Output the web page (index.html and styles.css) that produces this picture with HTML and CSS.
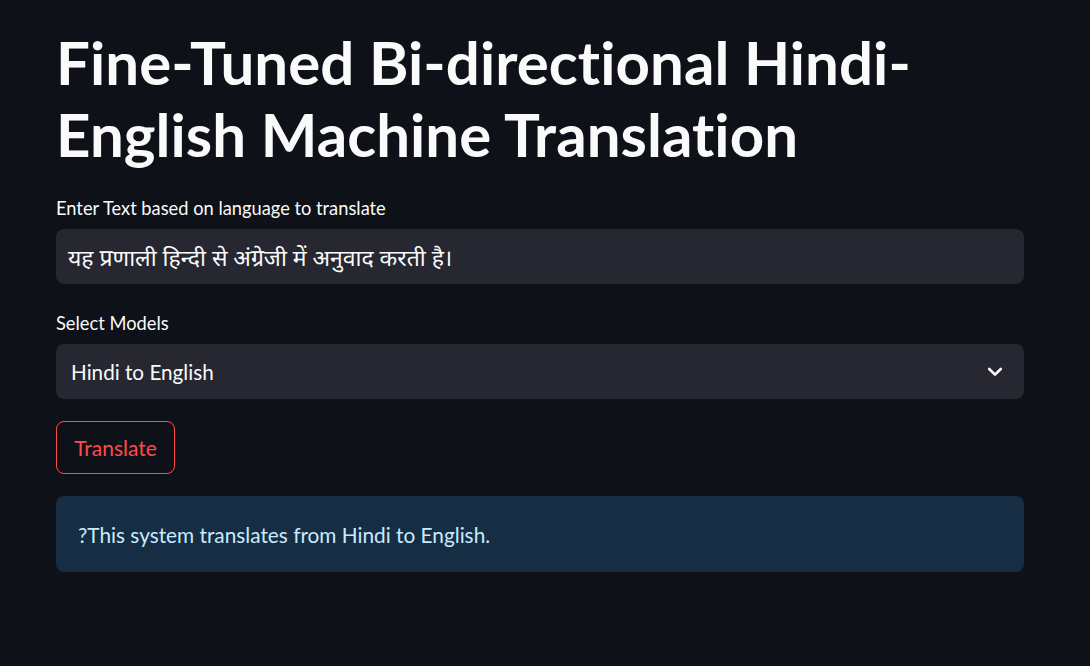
FILE: index.html
```html
<!DOCTYPE html>
<html lang="en">
<head>
<meta charset="utf-8">
<title>Fine-Tuned Bi-directional Hindi-English Machine Translation</title>
<link rel="stylesheet" href="styles.css">
</head>
<body>
<main class="app">
  <h1 class="title">Fine-Tuned Bi-directional Hindi-English Machine Translation</h1>
  <div class="field field-first">
    <label class="label">Enter Text based on language to translate</label>
    <div class="input">यह प्रणाली हिन्दी से अंग्रेजी में अनुवाद करती है।</div>
  </div>
  <div class="field field-next">
    <label class="label">Select Models</label>
    <div class="select">
      <span>Hindi to English</span>
      <svg class="chev" width="16" height="16" viewBox="0 0 16 16"><path d="M2.2 5 8 10.6 13.8 5" fill="none" stroke="#fafafa" stroke-width="2.6" stroke-linecap="round" stroke-linejoin="round"/></svg>
    </div>
  </div>
  <button class="btn">Translate</button>
  <div class="info">?This system translates from Hindi to English.</div>
</main>
</body>
</html>
```
FILE: styles.css
```css
* { box-sizing: border-box; }
html, body { margin: 0; padding: 0; }
body {
  background: #0e1117;
  color: #fafafa;
  font-family: "Lato", "Noto Sans", "Noto Sans Devanagari", sans-serif;
  font-variant-ligatures: no-common-ligatures;
  width: 1090px;
  height: 666px;
  overflow: hidden;
}
.app {
  width: 968px;
  margin-left: 56px;
  padding-top: 26px;
  display: flex;
  flex-direction: column;
}
.title {
  margin: 0;
  font-size: 60px;
  line-height: 72px;
  font-weight: 700;
  letter-spacing: 0.05px;
}
.field { display: flex; flex-direction: column; }
.field-first { margin-top: 26px; }
.field-next { margin-top: 27px; }
.label {
  font-size: 18.3px;
  line-height: 24px;
  margin-bottom: 9px;
}
.input {
  height: 55px;
  background: #262730;
  border-radius: 8px;
  padding: 0 12px;
  display: flex;
  align-items: center;
  font-size: 23px;
}
.select {
  height: 55px;
  background: #262730;
  border-radius: 8px;
  padding: 0 21px 0 15px;
  display: flex;
  align-items: center;
  justify-content: space-between;
  font-size: 20.7px;
}
.btn {
  align-self: flex-start;
  margin-top: 22px;
  height: 53px;
  width: 119px;
  background: transparent;
  border: 1px solid #ff4b4b;
  color: #ff4b4b;
  border-radius: 8px;
  font-family: inherit;
  font-size: 21px;
  padding: 0;
}
.info {
  margin-top: 22px;
  height: 76px;
  background: #172d43;
  color: #c7ebff;
  border-radius: 8px;
  padding: 0 22px;
  display: flex;
  align-items: center;
  font-size: 20.8px;
}
```
